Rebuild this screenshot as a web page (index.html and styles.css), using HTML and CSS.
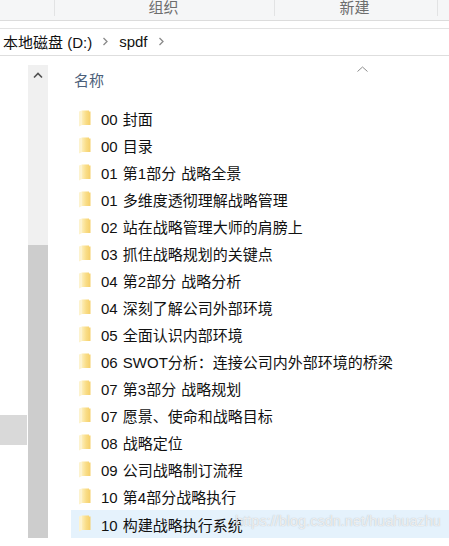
FILE: index.html
```html
<!DOCTYPE html>
<html lang="zh-CN">
<head>
    <meta charset="UTF-8">
    <title>spdf</title>
    <link rel="stylesheet" href="styles.css">
</head>
<body>
    <div class="ribbon">
        <div class="group group-org">组织</div>
        <div class="group group-new">新建</div>
    </div>
    <div class="crumbs">
        <span>本地磁盘 (D:)</span>
        <svg class="chev" width="7" height="9" viewBox="0 0 7 9"><path d="M1.5 1l3.5 3.5L1.5 8" fill="none" stroke="#8a8a8a" stroke-width="1.3"/></svg>
        <span>spdf</span>
        <svg class="chev" width="7" height="9" viewBox="0 0 7 9"><path d="M1.5 1l3.5 3.5L1.5 8" fill="none" stroke="#8a8a8a" stroke-width="1.3"/></svg>
    </div>
    <div class="main">
        <div class="nav"><div class="nav-selected"></div></div>
        <div class="scrollbar">
            <div class="scroll-up">
                <svg width="10" height="7" viewBox="0 0 10 7"><path d="M1 5.5L5 1.5l4 4" fill="none" stroke="#505050" stroke-width="1.6"/></svg>
            </div>
            <div class="scroll-thumb"></div>
        </div>
        <div class="files">
            <div class="col-head">
                <span>名称</span>
                <svg class="sort" width="11" height="6" viewBox="0 0 11 6"><path d="M.5 5.5l5-4.500 5 4.500" fill="none" stroke="#8c8c8c"/></svg>
            </div>
            <ul class="list">
                <li class="row"><svg class="folder"><use href="#folder"/></svg>00 封面</li>
                <li class="row"><svg class="folder"><use href="#folder"/></svg>00 目录</li>
                <li class="row"><svg class="folder"><use href="#folder"/></svg>01 第1部分 战略全景</li>
                <li class="row"><svg class="folder"><use href="#folder"/></svg>01 多维度透彻理解战略管理</li>
                <li class="row"><svg class="folder"><use href="#folder"/></svg>02 站在战略管理大师的肩膀上</li>
                <li class="row"><svg class="folder"><use href="#folder"/></svg>03 抓住战略规划的关键点</li>
                <li class="row"><svg class="folder"><use href="#folder"/></svg>04 第2部分 战略分析</li>
                <li class="row"><svg class="folder"><use href="#folder"/></svg>04 深刻了解公司外部环境</li>
                <li class="row"><svg class="folder"><use href="#folder"/></svg>05 全面认识内部环境</li>
                <li class="row"><svg class="folder"><use href="#folder"/></svg>06 SWOT分析：连接公司内外部环境的桥梁</li>
                <li class="row"><svg class="folder"><use href="#folder"/></svg>07 第3部分 战略规划</li>
                <li class="row"><svg class="folder"><use href="#folder"/></svg>07 愿景、使命和战略目标</li>
                <li class="row"><svg class="folder"><use href="#folder"/></svg>08 战略定位</li>
                <li class="row"><svg class="folder"><use href="#folder"/></svg>09 公司战略制订流程</li>
                <li class="row"><svg class="folder"><use href="#folder"/></svg>10 第4部分战略执行</li>
                <li class="row selected"><svg class="folder"><use href="#folder"/></svg>10 构建战略执行系统</li>
            </ul>
            <div class="watermark">https://blog.csdn.net/huahuazhu</div>
        </div>
    </div>
    <svg class="defs" width="0" height="0">
        <defs>
            <linearGradient id="fold" x1="0" y1="0" x2="1" y2="0">
                <stop offset="0" stop-color="#fdeeb8"/>
                <stop offset="0.5" stop-color="#f9dc85"/>
                <stop offset="1" stop-color="#f5cf6a"/>
            </linearGradient>
            <symbol id="folder" viewBox="0 0 12 17">
                <path d="M0 1.500L3 0.500V15L0 16.500Z" fill="#fdf3cf"/>
                <path d="M3 0.500H10V1.500H11.500V15H3Z" fill="url(#fold)"/>
            </symbol>
        </defs>
    </svg>
</body>
</html>
```

FILE: styles.css
```css
* {
    box-sizing: border-box;
}
html, body {
    margin: 0;
    height: 100%;
}
body {
    background: #fff;
    color: #111;
    font-family: "Liberation Sans", "Noto Sans CJK SC", sans-serif;
    overflow: hidden;
}
.defs {
    position: absolute;
}

/* toolbar */
.ribbon {
    display: flex;
    height: 21px;
    padding-left: 54px;
    background: #f5f6f7;
    border-bottom: 1px solid #dcdcdc;
}
.group {
    height: 16px;
    border-left: 1px solid #e2e3e4;
    color: #6d6d6d;
    font-size: 15px;
    line-height: 15px;
    text-align: center;
}
.group-org {
    width: 220px;
    padding-right: 2px;
}
.group-new {
    width: 164px;
    padding-right: 3px;
    border-right: 1px solid #e2e3e4;
}

/* address bar */
.crumbs {
    display: flex;
    align-items: center;
    gap: 10px;
    height: 28px;
    margin-top: 7px;
    padding-left: 3px;
    padding-bottom: 2px;
    border-top: 1px solid #e3e3e3;
    border-bottom: 1px solid #dedede;
    font-size: 15px;
}

/* body */
.main {
    display: flex;
    height: 473px;
    margin-top: 9px;
}
.nav {
    width: 28px;
    padding-top: 350px;
}
.nav-selected {
    width: 27px;
    height: 30px;
    background: #d9d9d9;
}
.scrollbar {
    width: 20px;
    background: #f0f0f0;
}
.scroll-up {
    display: flex;
    justify-content: center;
    height: 180px;
    padding-top: 7px;
}
.scroll-thumb {
    height: 293px;
    background: #cdcdcd;
}
.files {
    position: relative;
    flex: 1;
    min-width: 0;
    padding-left: 23px;
}
.col-head {
    position: relative;
    height: 31px;
    padding-top: 7px;
    padding-left: 3px;
    color: #4c607a;
    font-size: 15px;
    line-height: 18px;
}
.sort {
    position: absolute;
    left: 286px;
    top: 1px;
}
.list {
    margin: 0;
    padding: 9px 0 0;
    list-style: none;
}
.row {
    display: flex;
    align-items: center;
    height: 27px;
    padding-left: 8px;
    font-size: 15px;
    word-spacing: 1px;
    white-space: pre;
}
.row.selected {
    height: 28px;
    background: #e5f2fc;
}
.folder {
    flex: none;
    width: 12px;
    height: 17px;
    margin-right: 10px;
    margin-top: -1px;
}
.watermark {
    position: absolute;
    left: 187px;
    bottom: 9px;
    color: rgba(255, 255, 255, 0.75);
    font-size: 14.5px;
    white-space: nowrap;
    text-shadow: 0 0 1px rgba(150, 150, 150, 0.7);
}
```
